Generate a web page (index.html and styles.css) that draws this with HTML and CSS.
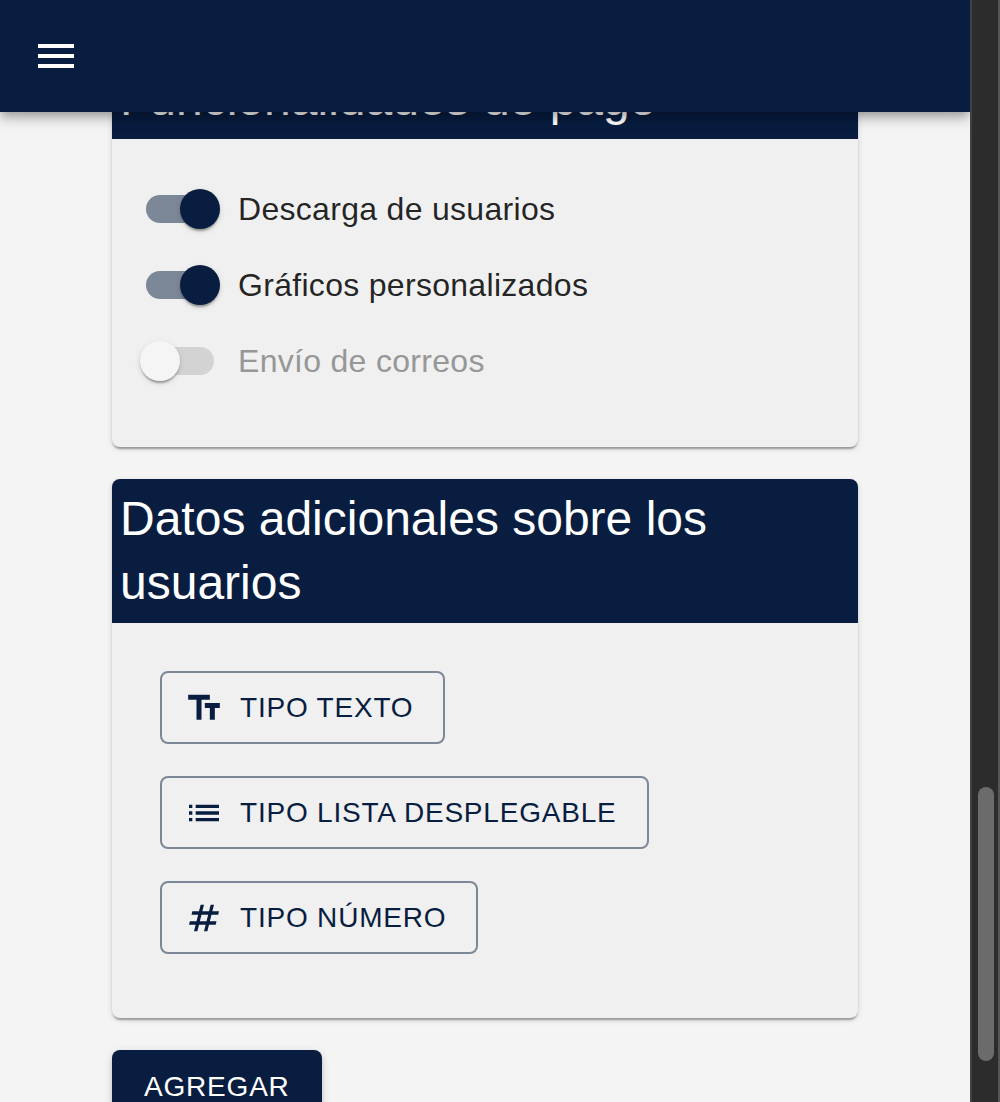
FILE: index.html
```html
<!DOCTYPE html>
<html lang="es">
<head>
<meta charset="utf-8">
<title>Configuración</title>
<link rel="stylesheet" href="styles.css">
</head>
<body>
<div class="window">
  <div class="page">
    <header class="appbar">
      <button class="menu-button" aria-label="Menú">
        <svg viewBox="0 0 24 24"><path d="M3 18h18v-2H3v2zm0-5h18v-2H3v2zm0-7v2h18V6H3z"/></svg>
      </button>
    </header>
    <main class="content">
      <section class="card">
        <h2 class="card-title">Funcionalidades de pago</h2>
        <div class="switches">
          <label class="switch-row"><span class="switch on"><span class="thumb"></span></span><span>Descarga de usuarios</span></label>
          <label class="switch-row"><span class="switch on"><span class="thumb"></span></span><span>Gráficos personalizados</span></label>
          <label class="switch-row disabled"><span class="switch"><span class="thumb"></span></span><span>Envío de correos</span></label>
        </div>
      </section>
      <section class="card">
        <h2 class="card-title">Datos adicionales sobre los usuarios</h2>
        <div class="types">
          <button class="button outlined">
            <svg viewBox="0 0 24 24"><path d="M2.5 4v3h5v12h3V7h5V4h-13zm19 5h-9v3h3v7h3v-7h3V9z"/></svg>
            Tipo texto
          </button>
          <button class="button outlined">
            <svg viewBox="0 0 24 24"><path d="M3 13h2v-2H3v2zm0 4h2v-2H3v2zm0-8h2V7H3v2zm4 4h14v-2H7v2zm0 4h14v-2H7v2zM7 7v2h14V7H7z"/></svg>
            Tipo lista desplegable
          </button>
          <button class="button outlined">
            <svg viewBox="0 0 24 24"><path d="M20.5 10L21 8h-4l1-4h-2l-1 4h-4l1-4h-2L9 8H5l-.5 2h4l-1 4h-4L3 16h4l-1 4h2l1-4h4l-1 4h2l1-4h4l.5-2h-4l1-4h4zm-7 4h-4l1-4h4l-1 4z"/></svg>
            Tipo número
          </button>
        </div>
      </section>
      <button class="button contained">Agregar</button>
    </main>
  </div>
  <div class="scrollbar"><div class="scroll-thumb"></div></div>
</div>
</body>
</html>
```
FILE: styles.css
```css
* { box-sizing: border-box; }

body {
  margin: 0;
  overflow: hidden;
  font-family: "Liberation Sans", Arial, sans-serif;
  font-size: 32px;
  color: rgba(0, 0, 0, 0.87);
}

.window {
  display: grid;
  grid-template-columns: 970px 30px;
  height: 1102px;
}

.page {
  height: 1102px;
  overflow: hidden;
  background: #f4f4f4;
}

.appbar {
  position: relative;
  z-index: 1;
  display: flex;
  align-items: center;
  height: 112px;
  padding: 0 32px;
  background: #081d40;
  box-shadow: 0 4px 8px -2px rgba(0, 0, 0, 0.2), 0 8px 10px rgba(0, 0, 0, 0.14), 0 2px 20px rgba(0, 0, 0, 0.12);
}

.menu-button {
  display: flex;
  padding: 0;
  border: 0;
  background: none;
}

.menu-button svg {
  width: 48px;
  height: 48px;
  fill: #fff;
}

/* Scrolled so that the first card starts beneath the app bar */
.content {
  display: flex;
  flex-direction: column;
  align-items: stretch;
  gap: 32px;
  margin-top: -53px;
  padding: 0 112px;
}

.card {
  overflow: hidden;
  border-radius: 8px;
  background: #f0f0f0;
  box-shadow: 0 4px 2px -2px rgba(0, 0, 0, 0.2), 0 2px 2px rgba(0, 0, 0, 0.14), 0 2px 6px rgba(0, 0, 0, 0.12);
}

.card-title {
  margin: 0;
  padding: 8px;
  background: #081d40;
  color: #fff;
  font-size: 48px;
  font-weight: 400;
  line-height: 64px;
}

.switches {
  display: flex;
  flex-direction: column;
  padding: 32px 32px 48px;
}

.switch-row {
  display: flex;
  align-items: center;
  gap: 24px;
  height: 76px;
  padding-left: 2px;
  line-height: 48px;
  letter-spacing: 0.3px;
}

.switch-row.disabled { color: #979797; }

.switch {
  display: flex;
  align-items: center;
  width: 68px;
  height: 28px;
  border-radius: 14px;
  background: #d3d3d3;
}

.switch.on {
  justify-content: flex-end;
  background: #7c8798;
}

.thumb {
  flex: none;
  width: 40px;
  height: 40px;
  margin: 0 -6px;
  border-radius: 50%;
  background: #f5f5f5;
  box-shadow: 0 4px 2px -2px rgba(0, 0, 0, 0.2), 0 2px 2px rgba(0, 0, 0, 0.14), 0 2px 6px rgba(0, 0, 0, 0.12);
}

.on .thumb { background: #081d40; }

.types {
  display: flex;
  flex-direction: column;
  align-items: flex-start;
  gap: 32px;
  padding: 48px 48px 64px;
}

.button {
  display: flex;
  align-items: center;
  border-radius: 8px;
  font: 400 28px/49px "Liberation Sans", Arial, sans-serif;
  letter-spacing: 0.8px;
  text-transform: uppercase;
  white-space: nowrap;
}

.outlined {
  padding: 10px 30px;
  border: 2px solid #7c8798;
  background: none;
  color: #081d40;
}

.outlined svg {
  width: 40px;
  height: 40px;
  margin: 0 16px 0 -8px;
  fill: currentColor;
}

.contained {
  align-self: flex-start;
  flex: none;
  padding: 12px 32px;
  border: 0;
  background: #081d40;
  color: #fff;
  box-shadow: 0 6px 2px -4px rgba(0, 0, 0, 0.2), 0 4px 4px rgba(0, 0, 0, 0.14), 0 2px 10px rgba(0, 0, 0, 0.12);
}

.scrollbar {
  padding: 787px 4px 0 6px;
  border-left: 2px solid #424242;
  border-right: 2px solid #565656;
  background: #2c2c2c;
}

.scroll-thumb {
  height: 274px;
  border-radius: 8px;
  background: #6b6b6b;
}
```
